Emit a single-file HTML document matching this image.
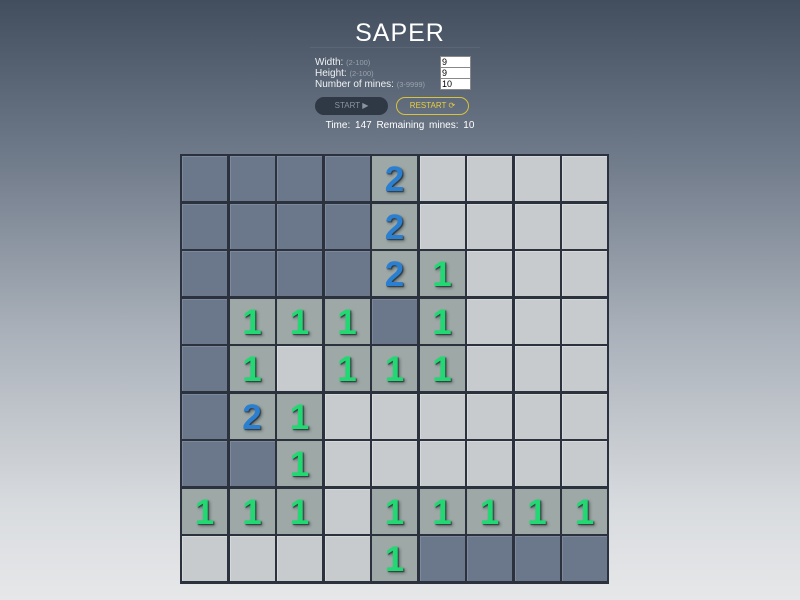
<!DOCTYPE html>
<html><head><meta charset="utf-8"><style>
*{margin:0;padding:0;box-sizing:border-box}
html,body{width:800px;height:600px;overflow:hidden}
body{font-family:"Liberation Sans",sans-serif;background:linear-gradient(#424e5e 0%,#6d7888 25%,#a9b0b9 55%,#d9dcdf 85%,#e6e7e9 100%);position:relative}
h1{position:absolute;left:0;width:800px;top:19px;text-align:center;color:#fff;font-weight:normal;font-size:25px;letter-spacing:1px}
.hr{position:absolute;left:310px;width:170px;top:47px;height:1px;background:#5a6675}
.lbl{position:absolute;left:315px;color:#f0f2f4;font-size:10px;line-height:11px}
.lbl small{color:#9aa3ad;font-size:7.5px}
.inp{position:absolute;left:440px;width:31px;height:12px;background:#fff;border:1px solid #888;font-size:9px;line-height:10px;padding-left:1px;color:#000}
.btn{position:absolute;top:97px;height:18px;border-radius:9px;font-size:8px;line-height:18px;text-align:center}
.start{left:315px;width:73px;background:#2f3845;color:#8a94a0}
.restart{left:396px;width:73px;border:1.5px solid #d9c23c;color:#e8cf3f;line-height:15px}
.time{position:absolute;top:120px;left:0;width:800px;text-align:center;color:#fff;font-size:10px;word-spacing:2px}
.board{position:absolute;left:180px;top:154px;width:429px;height:430px;background:#2b323d;padding:2px;display:grid;grid-template-columns:repeat(9,45px);grid-template-rows:repeat(9,45px);gap:2.5px}
.c{background:#6b788c;box-shadow:inset 1px 1px 0 #7c899c}
.e{background:#c7cbce;box-shadow:inset 1px 1px 0 #d6d9dc}
.n{background:#9ea9a7;font-weight:bold;font-size:35px;text-align:center;line-height:48px;text-shadow:1px 1px 1px rgba(20,30,40,.7),2px 2px 3px rgba(0,0,0,.4)}
.g{color:#22d872}.b{color:#2a7fd0}
</style></head><body>
<h1>SAPER</h1><div class="hr"></div>
<div class="lbl" style="top:57px">Width: <small>(2-100)</small></div>
<div class="lbl" style="top:68px">Height: <small>(2-100)</small></div>
<div class="lbl" style="top:79px">Number of mines: <small>(3-9999)</small></div>
<div class="inp" style="top:56px">9</div>
<div class="inp" style="top:67px">9</div>
<div class="inp" style="top:78px">10</div>
<div class="btn start">START &#9654;</div>
<div class="btn restart">RESTART &#10227;</div>
<div class="time">Time: 147 Remaining mines: 10</div>
<div class="board" id="b"></div>
<script>
var m=["CCCC2EEEE","CCCC2EEEE","CCCC21EEE","C111C1EEE","C1E111EEE","C21EEEEEE","CC1EEEEEE","111E11111","EEEE1CCCC"],h="";
m.forEach(function(r){for(var i=0;i<9;i++){var ch=r[i];if(ch=="C")h+='<div class="c"></div>';else if(ch=="E")h+='<div class="e"></div>';else h+='<div class="n '+(ch=="1"?"g":"b")+'">'+ch+'</div>';}});
document.getElementById("b").innerHTML=h;
</script>
</body></html>
